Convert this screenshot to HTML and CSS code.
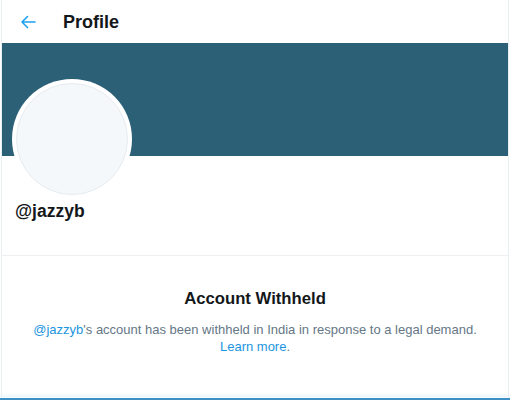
FILE: index.html
```html
<!DOCTYPE html>
<html>
<head>
<meta charset="utf-8">
<link rel="stylesheet" href="styles.css">
</head>
<body>
<div class="page">
  <header class="topbar">
    <span class="back">
      <svg width="16" height="14" viewBox="0 0 16 14"><path d="M15 7H2M7.5 1.5L2 7l5.5 5.5" fill="none" stroke="#1da1f2" stroke-width="1.6" stroke-linecap="round" stroke-linejoin="round"/></svg>
    </span>
    <h1 class="title">Profile</h1>
  </header>
  <div class="banner"></div>
  <section class="profile">
    <div class="avatar"><div class="avatar-inner"></div></div>
    <div class="handle">@jazzyb</div>
  </section>
  <section class="withheld">
    <h2 class="wh-title">Account Withheld</h2>
    <p class="wh-text"><span class="link">@jazzyb</span>'s account has been withheld in India in response to a legal demand.<br><span class="link">Learn more</span>.</p>
  </section>
  <div class="spacer"></div>
  <div class="bottom"></div>
</div>
</body>
</html>
```
FILE: styles.css
```css
html, body {
  margin: 0;
  padding: 0;
  background: #fff;
}
body {
  font-family: "Liberation Sans", Arial, sans-serif;
  color: #14171a;
}
.page {
  margin-left: 1px;
  width: 508px;
  height: 400px;
  border-left: 1px solid #e9eef1;
  border-right: 1px solid #e9eef1;
  display: flex;
  flex-direction: column;
  box-sizing: border-box;
}
.topbar {
  height: 43px;
  display: flex;
  align-items: center;
  flex-shrink: 0;
}
.back {
  width: 16px;
  height: 14px;
  margin-left: 18px;
  display: flex;
}
.title {
  margin: 0 0 0 27px;
  font-size: 18px;
  font-weight: bold;
  line-height: 20px;
  color: #14171a;
}
.banner {
  height: 113px;
  background: #2c6077;
  flex-shrink: 0;
}
.profile {
  padding: 0 0 34px 10px;
  border-bottom: 1px solid #eef1f3;
  flex-shrink: 0;
}
.avatar {
  width: 120px;
  height: 120px;
  margin-top: -77px;
  border-radius: 50%;
  background: #fff;
  padding: 4px;
  box-sizing: border-box;
  position: relative;
}
.avatar-inner {
  width: 100%;
  height: 100%;
  border-radius: 50%;
  background: #f5f8fa;
  border: 1px solid #e6ecf0;
  box-sizing: border-box;
}
.handle {
  margin: 2px 0 0 3px;
  font-size: 17.5px;
  font-weight: bold;
  line-height: 20px;
}
.withheld {
  padding-top: 33px;
  text-align: center;
  flex-shrink: 0;
}
.wh-title {
  margin: 0;
  font-size: 16.7px;
  line-height: 20px;
  font-weight: bold;
  color: #14171a;
}
.wh-text {
  margin: 12px 0 0;
  font-size: 13px;
  line-height: 17px;
  color: #657786;
}
.link {
  color: #1b95e0;
}
.spacer {
  flex: 1;
}
.bottom {
  height: 2px;
  background: #3d8fc4;
  box-shadow: 0 -3px 3px #e3f1fa;
  margin-left: -2px;
  margin-right: -2px;
  flex-shrink: 0;
}
```
